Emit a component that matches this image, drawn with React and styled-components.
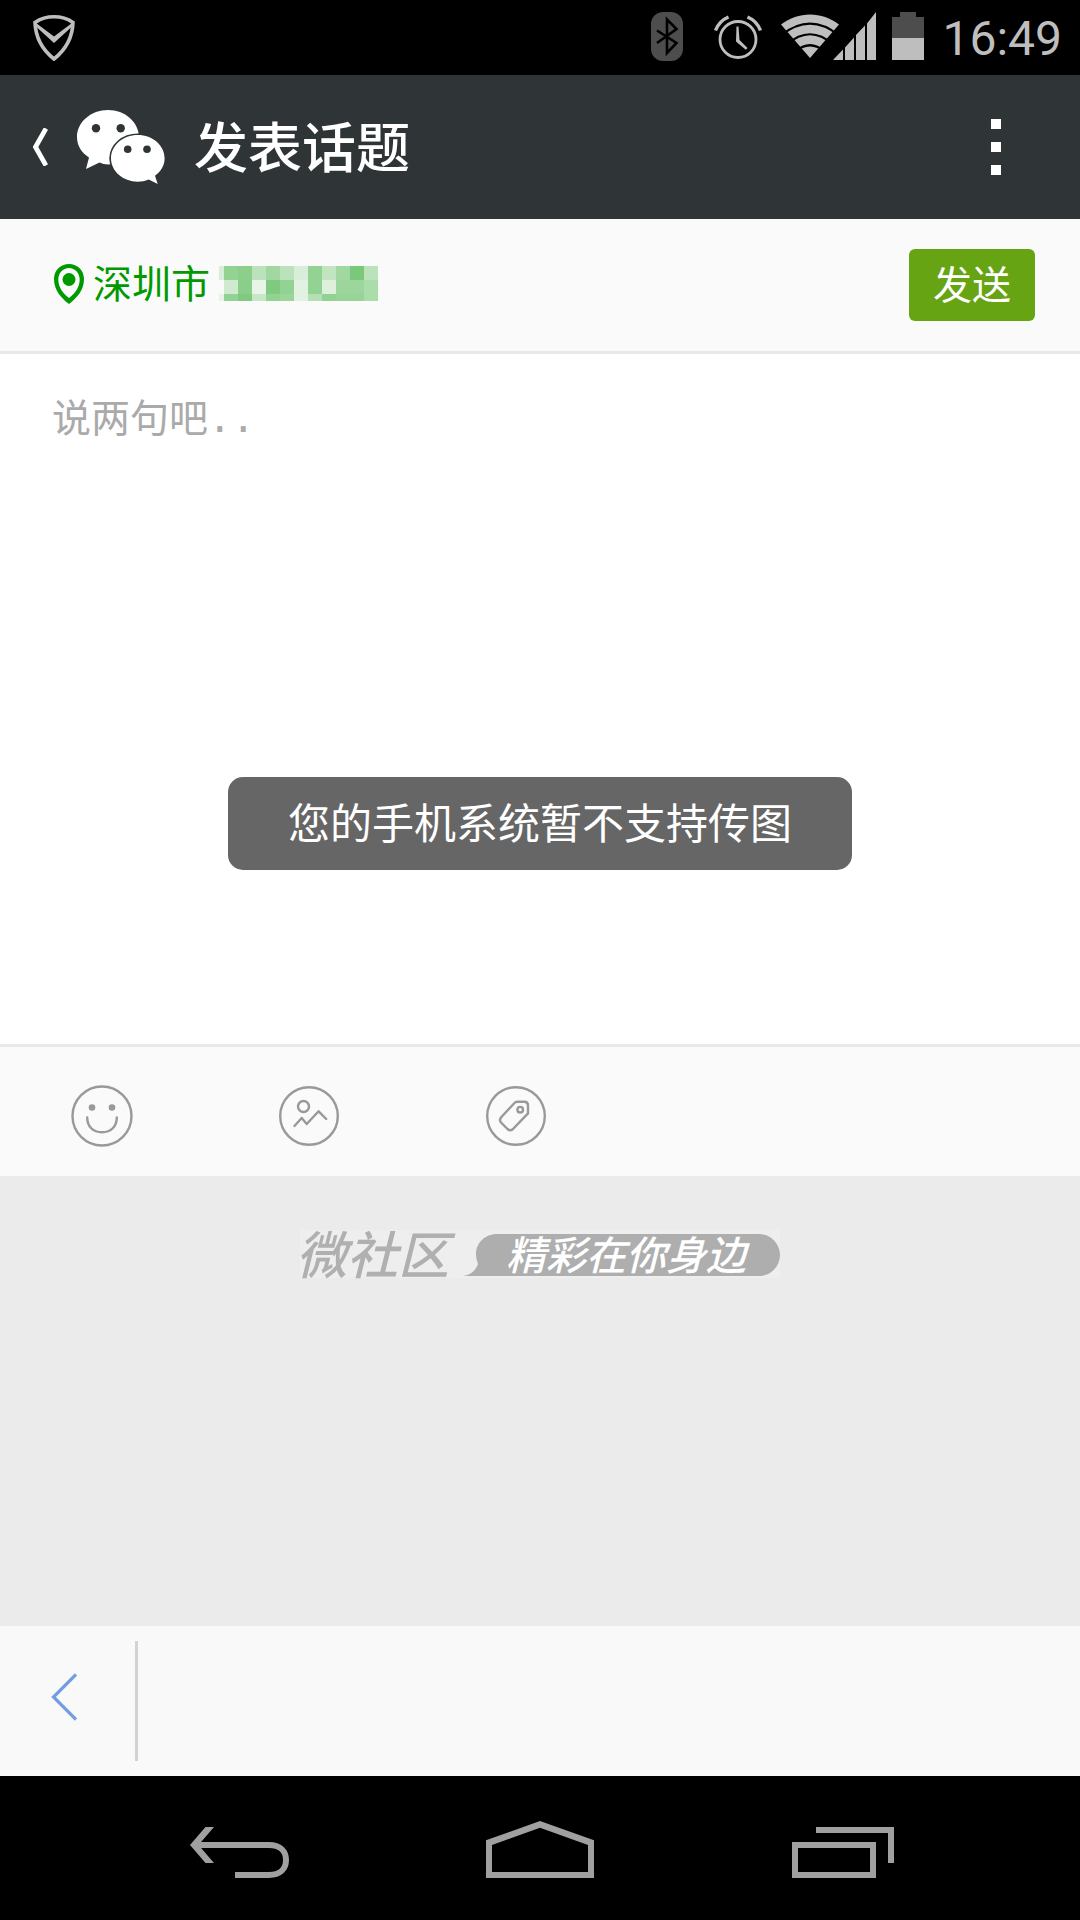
import React, { useState } from "react";
import styled, { createGlobalStyle } from "styled-components";

const GlobalStyle = createGlobalStyle`
  * {
    box-sizing: border-box;
  }

  body {
    margin: 0;
    background: #ebebeb;
    font-family: "Noto Sans CJK SC", sans-serif;
  }

  button {
    padding: 0;
    border: 0;
    background: none;
    color: inherit;
    font-family: inherit;
    cursor: pointer;
  }

  svg {
    display: block;
    flex-shrink: 0;
  }
`;

const Page = styled.div`
  display: flex;
  flex-direction: column;
  min-height: 100vh;
`;

const StatusBar = styled.div`
  display: flex;
  justify-content: space-between;
  height: 75px;
  padding: 12px 18px 0 33px;
  background: black;
  color: #bebebe;
`;

const StatusIcons = styled.div`
  display: flex;
  align-items: flex-start;
`;

const StatusIcon = styled.svg`
  margin-right: ${(props) => props.$gap || 0}px;
`;

const Clock = styled.time`
  font-family: Roboto, sans-serif;
  font-size: 48px;
  line-height: 54px;
`;

const TitleBar = styled.header`
  display: flex;
  align-items: center;
  height: 144px;
  padding: 0 79px 0 33px;
  background: #2f3437;
  color: white;
`;

const BackButton = styled.button`
  display: flex;
  align-items: center;
  gap: 29px;
`;

const Title = styled.h1`
  flex: 1;
  margin: 0 0 0 29px;
  padding-bottom: 4px;
  font-size: 54px;
  font-weight: 500;
  line-height: 78px;
`;

const MenuButton = styled.button`
  display: flex;
  flex-direction: column;
  gap: 13px;
`;

const MenuDot = styled.span`
  width: 10px;
  height: 10px;
  background: white;
`;

const LocationBar = styled.div`
  display: flex;
  align-items: center;
  justify-content: space-between;
  height: 135px;
  padding: 0 45px 0 54px;
  background: #fafafa;
  border-bottom: 3px solid #e8e8e8;
`;

const Location = styled.button`
  display: flex;
  align-items: center;
  padding-bottom: 3px;
  color: #009a00;
  font-size: 39px;
  line-height: 56px;
`;

const City = styled.span`
  margin: 0 9px;
  padding-bottom: 6px;
`;

const SendButton = styled.button`
  height: 72px;
  padding: 0 24px 6px;
  border-radius: 6px;
  background: #67a413;
  color: white;
  font-size: 39px;
  line-height: 66px;
`;

const Composer = styled.main`
  position: relative;
  background: white;
`;

const TopicInput = styled.textarea`
  display: block;
  width: 100%;
  height: 690px;
  padding: 37px 52px;
  border: 0;
  outline: 0;
  resize: none;
  background: transparent;
  color: #333;
  font-family: "DejaVu Sans Mono", "Noto Sans CJK SC", monospace;
  font-size: 39px;
  line-height: 56px;

  &::placeholder {
    color: #aaa;
    opacity: 1;
  }
`;

const Toast = styled.div`
  position: absolute;
  top: 423px;
  left: 0;
  right: 0;
  width: fit-content;
  margin: 0 auto;
  padding: 0 60px 6px;
  border-radius: 15px;
  background: #666;
  color: white;
  font-size: 42px;
  line-height: 87px;
`;

const Toolbar = styled.div`
  display: flex;
  gap: 145px;
  padding: 38px 71px 29px;
  background: #fafafa;
  border-top: 3px solid #e8e8e8;
`;

const ToolIcon = styled.svg`
  width: 62px;
  height: 62px;
  fill: none;
  stroke: #999;
  stroke-width: 2.4;
  stroke-linecap: round;
  stroke-linejoin: round;
`;

const Footer = styled.footer`
  display: flex;
  flex: 1;
  align-items: flex-start;
  justify-content: center;
  min-height: 120px;
  padding-top: 54px;
  background: #ebebeb;
`;

const Brand = styled.div`
  display: flex;
  align-items: center;
  width: 480px;
  height: 48px;
  padding-top: 2px;
  background: #eee;
  color: #b0b0b0;
  font-size: 51px;
  font-weight: 500;
  font-style: italic;
  line-height: 42px;
  white-space: nowrap;
`;

const BrandName = styled.span`
  flex: 1;
  margin-left: -4px;
  padding-bottom: 6px;
`;

const Slogan = styled.span`
  display: flex;
  align-items: center;
  height: 42px;
  padding: 0 34px 4px 0;
  border-radius: 0 21px 21px 0;
  background: #aeaeae;
  color: white;
  font-size: 40px;
  line-height: 38px;
`;

const BrowserBar = styled.div`
  display: flex;
  align-items: center;
  height: 150px;
  background: #f9f9f9;
`;

const BrowserBack = styled.button`
  display: flex;
  align-items: center;
  width: 138px;
  height: 120px;
  padding: 0 0 9px 51px;
  border-right: 3px solid #d3d3d3;
`;

const SystemNav = styled.nav`
  display: grid;
  grid-template-columns: repeat(3, 1fr);
  align-items: center;
  height: 144px;
  padding: 0 90px;
  background: black;
`;

const NavButton = styled.button`
  display: flex;
  justify-content: center;
`;

// colour of every censored cell, row by row; the first column is narrower
const mosaic = [
  ["#d9eed9", "#92d292", "#8bcf8b", "#bce2bc", "#a1d8a1", "#bce2bc", "#d8eed8", "#92d292", "#c1e4c1", "#a0d8a0", "#7ac87a", "#bce2bc"],
  ["#fafafa", "#d0ead0", "#8bce8b", "#e8f4e8", "#80ca80", "#92d292", "#e2f2e2", "#92d292", "#deefde", "#9cd69c", "#9cd69c", "#aaddaa"],
  ["#e8f4e8", "#92d292", "#80ca80", "#c6e6c6", "#92d292", "#9ad59a", "#e2f2e2", "#b5e0b5", "#92d292", "#98d498", "#98d498", "#aaddaa"],
];

const Mosaic = () => (
  <svg width="159" height="35" shapeRendering="crispEdges">
    {mosaic.map((row, y) =>
      row.map((color, x) => (
        <rect
          key={`${x}-${y}`}
          x={x === 0 ? 0 : x * 14 - 9}
          y={y * 14}
          width={x === 0 ? 5 : 14}
          height="14"
          fill={color}
        />
      ))
    )}
  </svg>
);

const ShieldIcon = () => (
  <svg width="42" height="49" viewBox="0 0 42 49" fill="none">
    <path
      d="M21 4.8C14 4.8 7 7 2 10.4C2.5 25 9 37.5 21 47C33 37.5 39.500 25 40 10.400C35 7 28 4.800 21 4.800Z"
      stroke="#bebebe"
      strokeWidth="3.6"
    />
    <path d="M3 11L21 24.500L39 11L38 15.500L21 31L4 15.500Z" fill="#bebebe" />
  </svg>
);

const BluetoothIcon = () => (
  <StatusIcon $gap={31} width="32" height="49" viewBox="0 0 32 49">
    <rect width="32" height="49" rx="12" fill="#4d4d4d" />
    <path
      d="M6 18.500L25.500 31L16 41V7.500L25.500 17L6 31"
      fill="none"
      stroke="black"
      strokeWidth="2.6"
    />
  </StatusIcon>
);

const AlarmIcon = () => (
  <StatusIcon $gap={19} width="48" height="49" viewBox="0 0 48 49" fill="none" stroke="#bebebe">
    <circle cx="24" cy="27.500" r="18" strokeWidth="2.8" />
    <path d="M1.500 18.500C4 12 8.500 7.500 14.500 5M46.500 18.500C44 12 39.500 7.500 33.500 5" strokeWidth="3.400" />
    <path d="M22.500 14.500H24.500L25.500 28L33.500 36L31.800 37.700L22 29.500Z" fill="#bebebe" stroke="none" />
  </StatusIcon>
);

const SignalIcon = () => (
  <StatusIcon $gap={15} width="96" height="49" viewBox="0 0 96 49" fill="#bebebe">
    <path d="M0 12.500C17 -1 41 -1 58 12.500L29 46Z" />
    <path
      d="M0 23.500C19 8 39 8 58 23.500M6 32.500C21 19 37 19 52 32.500M14 40C24 31 34 31 44 40"
      fill="none"
      stroke="black"
      strokeWidth="2.200"
    />
    <path d="M52 48L62 37.500V48ZM64 35.500L73 25.500V48H64ZM75 23L84 13.500V48H75ZM86 11.500L95 0V48H86Z" />
  </StatusIcon>
);

const BatteryIcon = () => (
  <StatusIcon $gap={18} width="32" height="48" viewBox="0 0 32 48">
    <path d="M0 5H8V0H24V5H32V26H0Z" fill="#4d4d4d" />
    <path d="M0 26H32V48H0Z" fill="#bebebe" />
  </StatusIcon>
);

const WechatIcon = () => (
  <svg width="88" height="74" viewBox="0 0 88 74" fill="white">
    <path d="M31 0C48 0 62 12 62 27.500C62 43 48 54.500 31 54.500C28 54.500 25 53.500 22.500 52.500L9 59L12 47.500C4.500 42.500 0 36 0 27C0 12 14 0 31 0Z" />
    <circle cx="19" cy="18.300" r="4.200" fill="#2f3437" />
    <circle cx="43.700" cy="18.300" r="4.200" fill="#2f3437" />
    <ellipse cx="60.800" cy="48.300" rx="28.500" ry="24.900" fill="#2f3437" />
    <path d="M60.800 25C75.600 25 87.600 35.400 87.600 48.300C87.600 55.500 84 61.500 78 65.800L80.700 74L71.700 69.500C68 71 64.500 71.700 60.800 71.700C46 71.700 34 61.200 34 48.300C34 35.400 46 25 60.800 25Z" />
    <circle cx="50.700" cy="39.300" r="3.800" fill="#2f3437" />
    <circle cx="70" cy="39.300" r="3.800" fill="#2f3437" />
  </svg>
);

const PinIcon = () => (
  <svg width="30" height="40" viewBox="0 0 30 40" fill="#009a00">
    <path
      fillRule="evenodd"
      d="M15 0C23.500 0 30 6.500 30 15C30 26 23 34 15 40C7 34 0 26 0 15C0 6.500 6.500 0 15 0ZM15 4C9 4 4.300 9 4.300 15.500C4.300 23 9 29.500 15 34C21 29.500 25.700 23 25.700 15.500C25.700 9 21 4 15 4Z"
    />
    <circle cx="15" cy="15.500" r="6.500" />
  </svg>
);

const App = () => {
  const [topic, setTopic] = useState("");

  return (
    <Page>
      <GlobalStyle />
      <StatusBar>
        <ShieldIcon />
        <StatusIcons>
          <BluetoothIcon />
          <AlarmIcon />
          <SignalIcon />
          <BatteryIcon />
          <Clock>16:49</Clock>
        </StatusIcons>
      </StatusBar>

      <TitleBar>
        <BackButton aria-label="返回微信">
          <svg width="15" height="38" viewBox="0 0 15 38" fill="none">
            <path d="M13 0.500L2.500 19L13 37.500" stroke="white" strokeWidth="4.800" />
          </svg>
          <WechatIcon />
        </BackButton>
        <Title>发表话题</Title>
        <MenuButton aria-label="更多">
          <MenuDot />
          <MenuDot />
          <MenuDot />
        </MenuButton>
      </TitleBar>

      <LocationBar>
        <Location>
          <PinIcon />
          <City>深圳市</City>
          <Mosaic />
        </Location>
        <SendButton>发送</SendButton>
      </LocationBar>

      <Composer>
        <TopicInput
          aria-label="话题内容"
          placeholder="说两句吧.."
          value={topic}
          onChange={(e) => setTopic(e.target.value)}
        />
        <Toast role="status">您的手机系统暂不支持传图</Toast>
      </Composer>

      <Toolbar>
        <button aria-label="表情">
          <ToolIcon viewBox="-31 -31 62 62">
            <circle r="29.500" />
            <circle cx="-10" cy="-8.500" r="3.300" fill="#999" stroke="none" />
            <circle cx="10" cy="-8.500" r="3.300" fill="#999" stroke="none" />
            <path d="M-14.800 1.500C-14.800 10.500 -9 16.300 0 16.300C9 16.300 14.800 10.500 14.800 1.500" />
          </ToolIcon>
        </button>
        <button aria-label="图片">
          <ToolIcon viewBox="-31 -31 62 62">
            <circle r="28.800" />
            <circle cx="-5.500" cy="-9.500" r="5.500" />
            <path d="M-14.500 10L-7.300 2L-2.300 8L9.600 -4.700L17.200 3" />
          </ToolIcon>
        </button>
        <button aria-label="标签">
          <ToolIcon viewBox="-31 -31 62 62">
            <circle r="28.800" />
            <path d="M1 -14.200H8.500Q12 -14.200 12 -10.500V-2.700L-3 13Q-5.800 15.500 -8.500 13L-15 6.500Q-17 4 -15 1.500L-2 -12.500Q-0.500 -14.200 1 -14.200Z" />
            <circle cx="4.200" cy="-6.300" r="2.800" />
          </ToolIcon>
        </button>
      </Toolbar>

      <Footer>
        <Brand>
          <BrandName>微社区</BrandName>
          <svg width="43" height="42" viewBox="0 0 43 42" fill="#aeaeae">
            <path d="M43 0H34C22 0 13 9 13 20C13 24 14 27 15 30C13 36 8 41 0 42H43Z" />
          </svg>
          <Slogan>精彩在你身边</Slogan>
        </Brand>
      </Footer>

      <BrowserBar>
        <BrowserBack aria-label="后退">
          <svg width="26" height="48" viewBox="0 0 26 48" fill="none">
            <path d="M25 1.500L2.500 24L25 46.500" stroke="#739ddd" strokeWidth="3.200" />
          </svg>
        </BrowserBack>
      </BrowserBar>

      <SystemNav>
        <NavButton aria-label="返回">
          <svg width="108" height="60" viewBox="0 0 108 60">
            <path d="M4 27L19.500 9H28L12.500 27L28 45H19.500Z" fill="#a0a0a0" />
            <path
              d="M10 27H83C94 27 100 33 100 42C100 51 94 57 83 57H49"
              fill="none"
              stroke="#a0a0a0"
              strokeWidth="6"
            />
          </svg>
        </NavButton>
        <NavButton aria-label="主屏幕">
          <svg width="108" height="60" viewBox="0 0 108 60" fill="#a0a0a0">
            <path fillRule="evenodd" d="M54 3L108 22.300V60H0V22.300ZM54 9.700L6 27V54H102V27Z" />
          </svg>
        </NavButton>
        <NavButton aria-label="最近任务">
          <svg width="108" height="60" viewBox="0 0 108 60" fill="none" stroke="#a0a0a0" strokeWidth="6">
            <path d="M9 27H87V57H9ZM30 12H105V45" />
          </svg>
        </NavButton>
      </SystemNav>
    </Page>
  );
};

export default App;
